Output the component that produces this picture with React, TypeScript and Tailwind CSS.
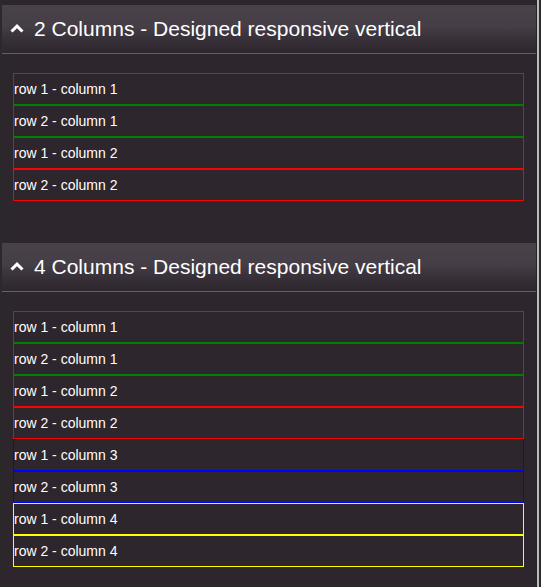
import React from "react";

type Cell = { label: string; color: string };

const twoCols: Cell[] = [
  { label: "row 1 - column 1", color: "border-[#008000]" },
  { label: "row 2 - column 1", color: "border-[#008000]" },
  { label: "row 1 - column 2", color: "border-[#ff0000]" },
  { label: "row 2 - column 2", color: "border-[#ff0000]" },
];

const fourCols: Cell[] = [
  ...twoCols,
  { label: "row 1 - column 3", color: "border-[#0000ff]" },
  { label: "row 2 - column 3", color: "border-[#0000ff]" },
  { label: "row 1 - column 4", color: "border-[#ffff00]" },
  { label: "row 2 - column 4", color: "border-[#ffff00]" },
];

function Chevron() {
  return (
    <svg width="14" height="9" viewBox="0 0 14 9" className="shrink-0">
      <polyline
        points="1.5,7.5 7,2.2 12.5,7.5"
        fill="none"
        stroke="#ffffff"
        strokeWidth="3"
        strokeLinecap="butt"
        strokeLinejoin="miter"
      />
    </svg>
  );
}

function Section({ title, cells, className }: { title: string; cells: Cell[]; className?: string }) {
  return (
    <section className={className}>
      <div className="h-[48px] flex items-center pl-[8px] pb-[2px] gap-[10px] bg-[linear-gradient(to_bottom,#49424b_0%,#453e47_45%,#3a333b_65%,#2e262d_100%)]">
        <Chevron />
        <h2 className="text-[21px] leading-none text-white font-['Liberation_Sans',Arial,sans-serif]">{title}</h2>
      </div>
      <div className="h-px bg-[#6b5c6a]" />
      <div className="pt-[19px] pl-[11px] pr-[12px]">
        {cells.map((c) => (
          <div
            key={c.label}
            className={`h-[32px] border ${c.color} flex items-center text-[14px] text-white font-['Liberation_Sans',Arial,sans-serif]`}
          >
            {c.label}
          </div>
        ))}
      </div>
    </section>
  );
}

export default function App() {
  return (
    <div className="w-[541px] h-[587px] flex bg-[#2e262d] overflow-hidden">
      <div className="w-[2px] bg-[#2a2a2a] shrink-0" />
      <main className="w-[534px] shrink-0 pt-[5px] bg-[#2e262d]">
        <Section title="2 Columns - Designed responsive vertical" cells={twoCols} />
        <Section title="4 Columns - Designed responsive vertical" cells={fourCols} className="mt-[42px]" />
      </main>
      <div className="w-[1px] bg-[#262626] shrink-0" />
      <div className="w-[2px] bg-[#bdbdbd] shrink-0" />
      <div className="w-[2px] bg-[#2b2b2b] shrink-0" />
    </div>
  );
}
